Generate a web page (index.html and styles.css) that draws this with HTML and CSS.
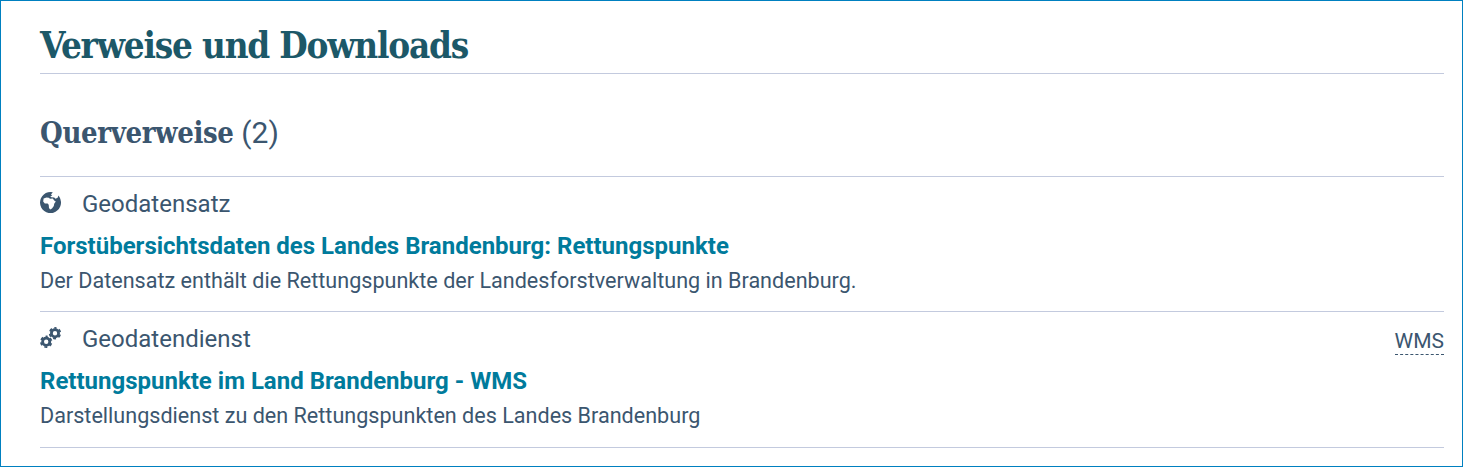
FILE: index.html
```html
<!DOCTYPE html>
<html lang="de">
<head>
<meta charset="utf-8">
<title>Verweise und Downloads</title>
<link rel="stylesheet" href="styles.css">
</head>
<body>
<main class="section">
  <h2 class="title">Verweise und Downloads</h2>
  <h3 class="subtitle">Querverweise <span class="count">(2)</span></h3>
  <article class="entry">
    <div class="meta">
      <svg class="icon" viewBox="0 0 21 21"><path fill="currentColor" fill-rule="evenodd" d="M12.8.3A10.5 10.5 0 1 0 19.6 5.300L18.500 3.600 17.600 5.800 15.500 6.800 14.200 5.600 11.300 5.200 10.300 4.300 12.300 3.600 11 2.600zM3.600 6.500 6.500 5.500 8.700 5.700 10 6.800 12.800 6.600 14.200 8.500 15.800 9.600 14.200 11.800 13.800 14 12 16.500 10.200 17.500 9 16 8.700 12.700 7.600 11.500 4.800 11.500 3.200 9.600z"/></svg>
      <span class="type">Geodatensatz</span>
    </div>
    <a class="link">Forstübersichtsdaten des Landes Brandenburg: Rettungspunkte</a>
    <p class="text">Der Datensatz enthält die Rettungspunkte der Landesforstverwaltung in Brandenburg.</p>
  </article>
  <article class="entry">
    <div class="meta">
      <svg class="icon" viewBox="0 0 21 21">
        <g fill="none" stroke="currentColor">
          <circle cx="6.200" cy="14.800" r="3.600" stroke-width="2.800"/>
          <circle cx="6.200" cy="14.800" r="5.300" stroke-width="1.800" stroke-dasharray="3 2.550" stroke-dashoffset="1.500" transform="rotate(-90 6.200 14.800)"/>
          <circle cx="15" cy="6.200" r="3.600" stroke-width="2.800"/>
          <circle cx="15" cy="6.200" r="5.300" stroke-width="1.800" stroke-dasharray="3 2.550" stroke-dashoffset="1.500" transform="rotate(-90 15 6.200)"/>
        </g>
      </svg>
      <span class="type">Geodatendienst</span>
      <abbr class="tag">WMS</abbr>
    </div>
    <a class="link">Rettungspunkte im Land Brandenburg - WMS</a>
    <p class="text">Darstellungsdienst zu den Rettungspunkten des Landes Brandenburg</p>
  </article>
</main>
</body>
</html>
```
FILE: styles.css
```css
* { box-sizing: border-box; }
body { margin: 0; background: #fff; color: #3b566f; font-family: Roboto, sans-serif; }
.section { height: 467px; border: 1px solid #0080c0; padding: 0 18px 0 39px; }
.title { margin: 0; height: 73px; padding-top: 20px; border-bottom: 1px solid #c3cade; color: #1c5868; font: 700 36.5px/50px "Roboto Slab", "DejaVu Serif Condensed", "DejaVu Serif", serif; letter-spacing: -1.2px; }
.subtitle { margin: 0; height: 102px; padding-top: 39px; font: 700 29px/40px "Roboto Slab", "DejaVu Serif Condensed", "DejaVu Serif", serif; letter-spacing: -.35px; }
.count { margin-left: -1px; font: 400 30px/40px Roboto, sans-serif; letter-spacing: 0; }
.entry { height: 135px; border-top: 1px solid #c3cade; padding-top: 10px; }
.entry:last-child { height: 137px; border-bottom: 1px solid #c3cade; }
.meta { display: flex; height: 34px; align-items: center; }
.icon { width: 21px; height: 21px; margin: 0 21px 3px 0; }
.type { font-size: 24px; line-height: 34px; }
.tag { margin: 5px 0 0 auto; font-size: 21px; line-height: 26px; border-bottom: 1px dashed currentColor; }
.link { display: block; margin-top: 8px; color: #007b9c; font-size: 24px; font-weight: 700; line-height: 34px; }
.text { margin: 0; font-size: 21.59px; line-height: 36px; }
```
